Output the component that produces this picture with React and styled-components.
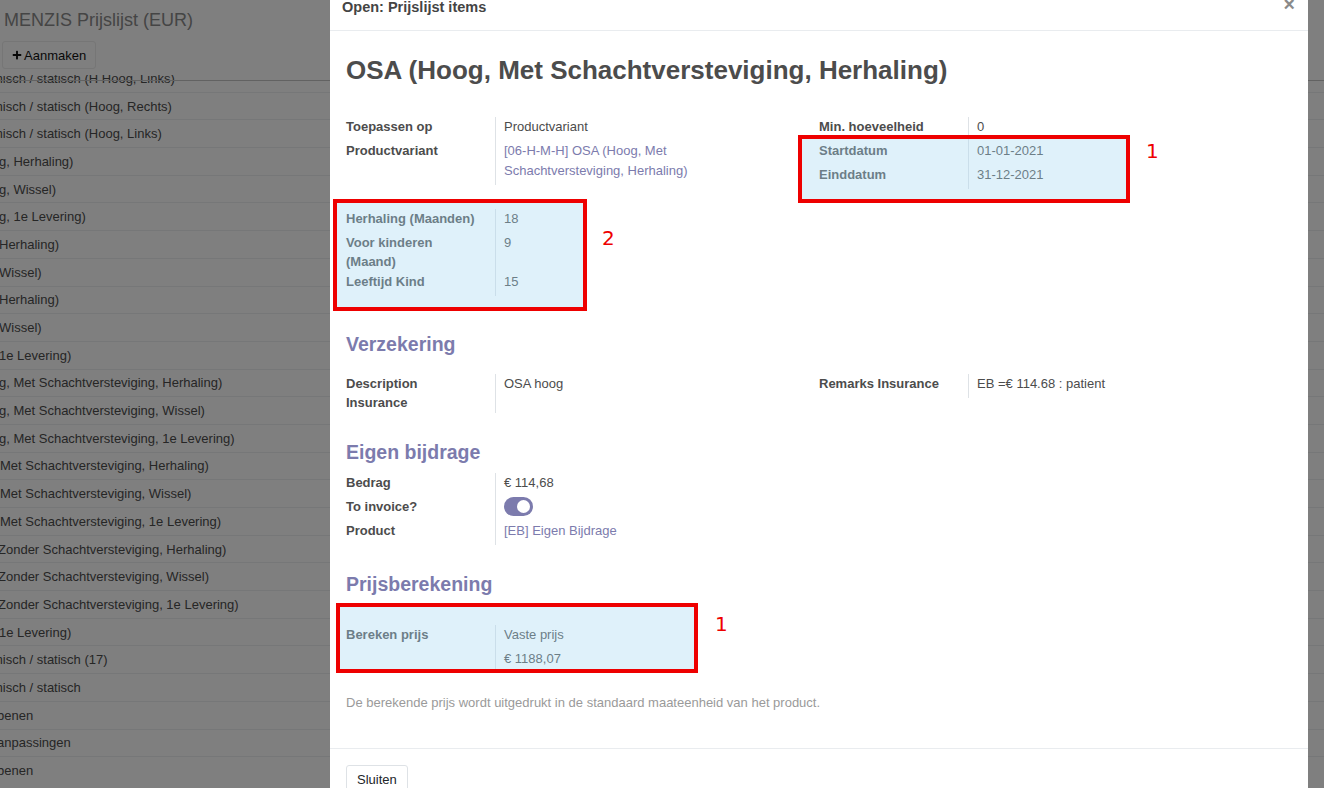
import React from 'react';
import styled, { createGlobalStyle } from 'styled-components';
import { FaPlus } from 'react-icons/fa';

const GlobalStyle = createGlobalStyle`
  html, body {
    margin: 0;
    padding: 0;
  }
  body {
    font-family: "Liberation Sans", Arial, sans-serif;
    font-size: 13px;
    color: #4c4c4c;
    background: #fff;
    overflow: hidden;
  }
  *, *::before, *::after {
    box-sizing: border-box;
  }
`;

// rows of the price list behind the dialog (left part scrolled out of view)
const listRows = [
  { text: 'misch / statisch (H Hoog, Links)', shift: 8 },
  { text: 'misch / statisch (Hoog, Rechts)', shift: 8 },
  { text: 'misch / statisch (Hoog, Links)', shift: 8 },
  { text: 'g, Herhaling)', shift: 1 },
  { text: 'g, Wissel)', shift: 1 },
  { text: 'g, 1e Levering)', shift: 1 },
  { text: 'Herhaling)', shift: 1 },
  { text: 'Wissel)', shift: 1 },
  { text: 'Herhaling)', shift: 1 },
  { text: 'Wissel)', shift: 1 },
  { text: '1e Levering)', shift: 1 },
  { text: 'g, Met Schachtversteviging, Herhaling)', shift: 1 },
  { text: 'g, Met Schachtversteviging, Wissel)', shift: 1 },
  { text: 'g, Met Schachtversteviging, 1e Levering)', shift: 1 },
  { text: 'Met Schachtversteviging, Herhaling)', shift: 0 },
  { text: 'Met Schachtversteviging, Wissel)', shift: 0 },
  { text: 'Met Schachtversteviging, 1e Levering)', shift: 0 },
  { text: 'Zonder Schachtversteviging, Herhaling)', shift: 2 },
  { text: 'Zonder Schachtversteviging, Wissel)', shift: 2 },
  { text: 'Zonder Schachtversteviging, 1e Levering)', shift: 2 },
  { text: '1e Levering)', shift: 1 },
  { text: 'misch / statisch (17)', shift: 8 },
  { text: 'misch / statisch', shift: 8 },
  { text: 'benen', shift: 3 },
  { text: 'anpassingen', shift: 3 },
  { text: 'benen', shift: 3 },
];

const App = () => {
  return (
    <>
      <GlobalStyle />
      <Page>
        <ControlPanel>
          <Breadcrumb>MENZIS Prijslijst (EUR)</Breadcrumb>
          <CreateButton>
            <FaPlus size={10} />
            Aanmaken
          </CreateButton>
        </ControlPanel>
        <ListViewport>
          {listRows.map((row, index) => (
            <ListRow key={index}>
              <RowText $shift={row.shift}>{row.text}</RowText>
            </ListRow>
          ))}
        </ListViewport>
      </Page>

      <Backdrop />

      <Dialog>
        <DialogHeader>
          <DialogTitle>Open: Prijslijst items</DialogTitle>
          <CloseX>×</CloseX>
        </DialogHeader>

        <DialogBody>
          <RecordTitle>OSA (Hoog, Met Schachtversteviging, Herhaling)</RecordTitle>

          <Columns>
            <Stack>
              <div>
                <FieldRow>
                  <Label>Toepassen op</Label>
                  <Value><Field>Productvariant</Field></Value>
                </FieldRow>
                <FieldRow>
                  <Label>Productvariant</Label>
                  <Value>
                    <Field><Link>[06-H-M-H] OSA (Hoog, Met Schachtversteviging, Herhaling)</Link></Field>
                  </Value>
                </FieldRow>
              </div>

              <Highlight $x={-13} $y={-10} $w={254} $h={112}>
                <FieldRow>
                  <Label>Herhaling (Maanden)</Label>
                  <Value><Field>18</Field></Value>
                </FieldRow>
                <FieldRow>
                  <Label>Voor kinderen (Maand)</Label>
                  <Value><Field>9</Field></Value>
                </FieldRow>
                <FieldRow>
                  <Label>Leeftijd Kind</Label>
                  <Value><Field>15</Field></Value>
                </FieldRow>
                <Marker $left={256} $top={19}>2</Marker>
              </Highlight>
            </Stack>

            <div>
              <FieldRow>
                <Label>Min. hoeveelheid</Label>
                <Value><Field>0</Field></Value>
              </FieldRow>
              <Highlight $x={-21} $y={-6} $w={332} $h={68}>
                <FieldRow>
                  <Label>Startdatum</Label>
                  <Value><Field>01-01-2021</Field></Value>
                </FieldRow>
                <FieldRow>
                  <Label>Einddatum</Label>
                  <Value><Field>31-12-2021</Field></Value>
                </FieldRow>
                <Marker $left={327} $top={0}>1</Marker>
              </Highlight>
            </div>
          </Columns>

          <SectionTitle $top={37} $bottom={17.5}>Verzekering</SectionTitle>
          <Columns>
            <FieldRow>
              <Label>Description Insurance</Label>
              <Value><Field>OSA hoog</Field></Value>
            </FieldRow>
            <FieldRow>
              <Label>Remarks Insurance</Label>
              <Value><Field>EB =€ 114.68 : patient</Field></Value>
            </FieldRow>
          </Columns>

          <SectionTitle $top={28} $bottom={8.5}>Eigen bijdrage</SectionTitle>
          <Columns>
            <div>
              <FieldRow>
                <Label>Bedrag</Label>
                <Value><Field>€ 114,68</Field></Value>
              </FieldRow>
              <FieldRow>
                <Label>To invoice?</Label>
                <Value>
                  <Field><Toggle $on /></Field>
                </Value>
              </FieldRow>
              <FieldRow>
                <Label>Product</Label>
                <Value><Field><Link>[EB] Eigen Bijdrage</Link></Field></Value>
              </FieldRow>
            </div>
          </Columns>

          <SectionTitle $top={28} $bottom={29}>Prijsberekening</SectionTitle>
          <Columns>
            <Highlight $x={-10} $y={-22} $w={362} $h={70}>
              <FieldRow>
                <Label>Bereken prijs</Label>
                <Value>
                  <Field>Vaste prijs</Field>
                  <Field>€ 1188,07</Field>
                </Value>
              </FieldRow>
              <Marker $left={369} $top={-11}>1</Marker>
            </Highlight>
          </Columns>

          <Note>De berekende prijs wordt uitgedrukt in de standaard maateenheid van het product.</Note>
        </DialogBody>

        <DialogFooter>
          <SecondaryButton>Sluiten</SecondaryButton>
        </DialogFooter>
      </Dialog>
    </>
  );
};

export default App;

/* background page */

const Page = styled.div`
  height: 100vh;
  display: flex;
  flex-direction: column;
`;

const ControlPanel = styled.div`
  height: 75px;
  padding: 9px 0 0 4px;
  display: flex;
  flex-direction: column;
  align-items: flex-start;
`;

const Breadcrumb = styled.div`
  font-size: 18px;
  line-height: 22px;
  color: #8a8a8a;
`;

const CreateButton = styled.button`
  margin: 10px 0 0 -2px;
  height: 28px;
  padding: 0 9px 0 9px;
  display: flex;
  align-items: center;
  gap: 2px;
  font-family: inherit;
  font-size: 13px;
  color: #111;
  background: #fff;
  border: 1px solid #ececec;
  border-radius: 3px;
`;

const ListViewport = styled.div`
  flex: 1;
  overflow: hidden;
  position: relative;

  &::before {
    content: '';
    position: absolute;
    top: 5px;
    left: 0;
    right: 0;
    height: 1px;
    background: #c4c4c4;
    z-index: 1;
  }
`;

const ListRow = styled.div`
  height: 27.7px;
  border-top: 1px solid #eceef0;
  display: flex;
  align-items: center;
  white-space: nowrap;
  color: #4c4c4c;

  &:first-child {
    margin-top: -11px;
  }
`;

const RowText = styled.span`
  margin-left: ${p => -p.$shift}px;
`;

const Backdrop = styled.div`
  position: fixed;
  inset: 0;
  z-index: 10;
  background: rgba(0, 0, 0, 0.5);
`;

/* dialog */

const Dialog = styled.div`
  position: fixed;
  top: -16px;
  left: 330px;
  z-index: 11;
  width: 978px;
  background: #fff;
`;

const DialogHeader = styled.div`
  display: flex;
  align-items: center;
  justify-content: space-between;
  padding: 13px 13px 13px 12px;
  border-bottom: 1px solid #e9ecef;
`;

const DialogTitle = styled.div`
  font-size: 14.5px;
  line-height: 20px;
  font-weight: 700;
  color: #444;
`;

const CloseX = styled.span`
  font-size: 19.5px;
  line-height: 20px;
  font-weight: 700;
  color: #8a8a8a;
  margin-top: -6px;
`;

const DialogBody = styled.div`
  padding: 16px 16px 36px;
`;

const RecordTitle = styled.h1`
  margin: 8px 0 31px;
  font-size: 26px;
  line-height: 31.2px;
  font-weight: 700;
  color: #4c4c4c;
`;

const Columns = styled.div`
  display: grid;
  grid-template-columns: 1fr 1fr;
  align-items: start;
`;

const Stack = styled.div`
  display: flex;
  flex-direction: column;
  gap: 24px;
`;

const FieldRow = styled.div`
  display: grid;
  grid-template-columns: 150px 1fr;
`;

const Label = styled.div`
  font-weight: 700;
  line-height: 19.5px;
  padding-right: 16px;
  border-right: 1px solid #dee2e6;
  color: #4c4c4c;
`;

const Value = styled.div`
  padding: 0 60px 0 8px;
  line-height: 19.5px;
`;

const Field = styled.div`
  padding-bottom: 4.5px;
`;

const Link = styled.span`
  color: #7c7bad;
`;

const Toggle = styled.span`
  display: block;
  position: relative;
  width: 29px;
  height: 19px;
  margin-top: 0.5px;
  border-radius: 10px;
  background: ${p => (p.$on ? '#7c7bad' : '#ccc')};

  &::after {
    content: '';
    position: absolute;
    top: 3px;
    ${p => (p.$on ? 'right: 3px;' : 'left: 3px;')}
    width: 13px;
    height: 13px;
    border-radius: 50%;
    background: #fff;
  }
`;

const SectionTitle = styled.div`
  margin: ${p => p.$top}px 0 ${p => p.$bottom}px;
  font-size: 19.5px;
  line-height: 23.4px;
  font-weight: 700;
  color: #7c7bad;
`;

const Note = styled.div`
  margin-top: 20px;
  line-height: 19.5px;
  color: #9a9a9a;
`;

/* annotation boxes drawn over the form */

const Highlight = styled.div`
  position: relative;

  &::after {
    content: '';
    position: absolute;
    left: ${p => p.$x}px;
    top: ${p => p.$y}px;
    width: ${p => p.$w}px;
    height: ${p => p.$h}px;
    border: 4px solid #ee0000;
    background: rgba(166, 216, 241, 0.36);
    pointer-events: none;
    z-index: 2;
  }
`;

const Marker = styled.span`
  position: absolute;
  left: ${p => p.$left}px;
  top: ${p => p.$top}px;
  font-family: "DejaVu Sans", sans-serif;
  font-size: 20px;
  line-height: 20px;
  color: #ee0000;
`;

const DialogFooter = styled.div`
  border-top: 1px solid #e9ecef;
  padding: 16px 16px 20px;
`;

const SecondaryButton = styled.button`
  font-family: inherit;
  font-size: 13px;
  line-height: 19.5px;
  padding: 4px 10px 5px;
  color: #212529;
  background: #fff;
  border: 1px solid #dee2e6;
  border-radius: 3px;
`;
